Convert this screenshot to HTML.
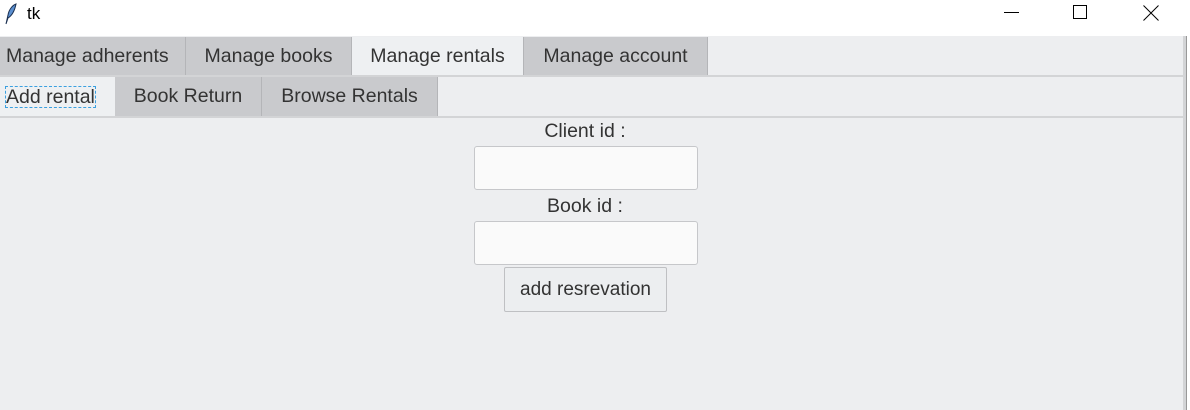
<!DOCTYPE html>
<html><head><style>
*{margin:0;padding:0;box-sizing:border-box}
body{width:1190px;height:410px;overflow:hidden;background:#fff;font-family:"Liberation Sans",sans-serif;position:relative;color:#333}
.a{position:absolute}
.tab{position:absolute;background:#c9cacd;border-right:1px solid #b4b5b8;font-size:19.5px;color:#333;display:flex;align-items:center;justify-content:center}
.sel{background:#eef0f2}
.inp{position:absolute;background:#fafafa;border:1px solid #c6c7ca;border-radius:3px}
</style></head><body>
<svg class="a" style="left:3px;top:3px" width="14" height="22" viewBox="0 0 14 22"><path d="M3 21 L5 12 C6 6 10 2 13 1 C12 6 10 12 5 15 Z" fill="#5b8fd0" stroke="#1a2f50" stroke-width="1"/></svg>
<div class="a" style="left:27px;top:4px;font-size:17px;color:#000">tk</div>
<div class="a" style="left:1004px;top:12px;width:15px;height:1px;background:#000"></div>
<div class="a" style="left:1073px;top:5px;width:14px;height:14px;border:1px solid #000"></div>
<svg class="a" style="left:1143px;top:5px" width="16" height="16"><path d="M0.5 0.5L15.5 15.5M15.5 0.5L0.5 15.5" stroke="#000" stroke-width="1"/></svg>
<div class="a" style="left:0;top:36px;width:1186px;height:374px;background:#edeef0"></div>
<div class="a" style="left:1183px;top:36px;width:3px;height:374px;background:#d3d4d6"></div>
<div class="a" style="left:1186px;top:36px;width:4px;height:374px;background:#fff;border-left:1px solid #999"></div>
<div class="tab" style="left:0;top:37px;width:186px;height:38px;justify-content:flex-start;padding-left:6px">Manage adherents</div>
<div class="tab" style="left:186px;top:37px;width:166px;height:38px">Manage books</div>
<div class="tab sel" style="left:352px;top:37px;width:172px;height:38px">Manage rentals</div>
<div class="tab" style="left:524px;top:37px;width:184px;height:38px">Manage account</div>
<div class="a" style="left:0;top:75px;width:1183px;height:2px;background:#d3d4d6"></div>
<div class="tab sel" style="left:0;top:77px;width:115px;height:39px;border-right:none;justify-content:flex-start;padding-left:5px"><span style="border:1px dashed #3aa0e0;padding:0;line-height:20px">Add rental</span></div>
<div class="tab" style="left:115px;top:77px;width:147px;height:39px">Book Return</div>
<div class="tab" style="left:262px;top:77px;width:176px;height:39px">Browse Rentals</div>
<div class="a" style="left:0;top:116px;width:1183px;height:2px;background:#d3d4d6"></div>
<div class="a" style="left:485px;top:120px;width:200px;text-align:center;font-size:19.5px">Client id :</div>
<div class="inp" style="left:474px;top:146px;width:224px;height:44px"></div>
<div class="a" style="left:485px;top:195px;width:200px;text-align:center;font-size:19.5px">Book id :</div>
<div class="inp" style="left:474px;top:221px;width:224px;height:44px"></div>
<div class="a" style="left:504px;top:267px;width:163px;height:45px;border:1px solid #bfc0c3;border-radius:2px;background:#eceef0;font-size:19px;display:flex;align-items:center;justify-content:center">add resrevation</div>
</body></html>
